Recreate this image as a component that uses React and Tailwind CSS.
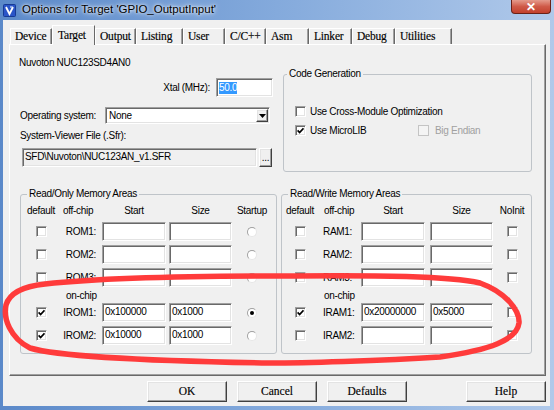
import React from 'react';

const sunken =
  'border border-t-[#a0a0a0] border-l-[#a0a0a0] border-r-white border-b-white shadow-[inset_1px_1px_0_#696969,inset_-1px_-1px_0_#e3e3e3]';
const raised =
  'border border-t-white border-l-white border-r-[#404040] border-b-[#404040] shadow-[inset_-1px_-1px_0_#a0a0a0,inset_1px_1px_0_#e3e3e3]';

function Edit({ className = '', value, gray }) {
  return (
    <div
      className={`h-[19px] shrink-0 ${sunken} ${gray ? 'bg-[#f0f0f0]' : 'bg-white'} pl-[2px] leading-[16px] whitespace-nowrap overflow-hidden ${className}`}
    >
      {value}
    </div>
  );
}

function Check({ checked, disabled }) {
  return (
    <span
      className={`w-[11px] h-[11px] shrink-0 flex items-center justify-center ${
        disabled ? 'border border-[#c4c4c4] bg-[#f4f4f4]' : `${sunken} bg-white`
      }`}
    >
      {checked && (
        <svg width="7" height="7" viewBox="0 0 7 7">
          <path d="M0.6 3.4 L2.6 5.5 L6.5 1.2" stroke="#000" strokeWidth="1.7" fill="none" />
        </svg>
      )}
    </span>
  );
}

function Radio({ checked }) {
  return (
    <span className="w-[10px] h-[10px] rounded-full border border-t-[#a0a0a0] border-l-[#a0a0a0] border-r-[#e6e6e6] border-b-[#e6e6e6] bg-white flex items-center justify-center">
      {checked && <span className="w-[4px] h-[4px] rounded-full bg-black" />}
    </span>
  );
}

const tabs = [
  ['Device', 'w-[42px]'],
  ['Target', 'w-[43px]'],
  ['Output', 'w-[41px]'],
  ['Listing', 'w-[47px]'],
  ['User', 'w-[42px]'],
  ['C/C++', 'w-[41px]'],
  ['Asm', 'w-[43px]'],
  ['Linker', 'w-[43px]'],
  ['Debug', 'w-[43px]'],
  ['Utilities', 'w-[57px]'],
];

// left group row: default | label | start | size | startup
function RomRow({ label, checked, start = '', size = '', radio, className = '' }) {
  return (
    <div className={`h-[19px] flex items-center ${className}`}>
      <div className="w-[38px] flex justify-center">
        <Check checked={checked} />
      </div>
      <div className="w-[42px] text-right pr-[6px]">{label}</div>
      <Edit className="w-[64px]" value={start} />
      <Edit className="w-[63px] ml-[3px]" value={size} />
      <div className="w-[40px] flex justify-center">
        <Radio checked={radio} />
      </div>
    </div>
  );
}

function RamRow({ label, checked, start = '', size = '', className = '' }) {
  return (
    <div className={`h-[19px] flex items-center ${className}`}>
      <div className="w-[34px] flex justify-center">
        <Check checked={checked} />
      </div>
      <div className="w-[44px] pl-[6px]">{label}</div>
      <Edit className="w-[64px]" value={start} />
      <Edit className="w-[63px] ml-[5px]" value={size} />
      <div className="w-[38px] flex justify-center">
        <Check />
      </div>
    </div>
  );
}

const Button = ({ children, className = '' }) => (
  <div
    className={`w-[80px] h-[21px] ${raised} bg-[#f0f0f0] flex items-center justify-center font-['Liberation_Serif',serif] text-[11.5px] [-webkit-text-stroke:0.15px_#000] ${className}`}
  >
    {children}
  </div>
);

export default function App() {
  return (
    <div className="relative w-[554px] h-[410px] flex flex-col overflow-hidden bg-gradient-to-r from-[#5b89c9] via-[#84aadc] to-[#b0c9ea] font-['Liberation_Sans',Arial,sans-serif] text-black text-[10px] tracking-[-0.3px]">
      {/* Title bar */}
      <div className="h-[20px] shrink-0 flex items-center pl-[3px]">
        <svg width="13" height="13" viewBox="0 0 13 13">
          <rect x="0.5" y="0.5" width="12" height="12" rx="1" fill="#2b55c8" stroke="#173a94" />
          <path d="M3 3 L6.5 10 L10 3" stroke="#fff" strokeWidth="1.8" fill="none" />
          <path d="M7 3 L9.5 3" stroke="#cfe0ff" strokeWidth="1.2" />
        </svg>
        <span className="ml-[6px] text-[11.5px] tracking-normal [text-shadow:0_0_6px_#fff,0_0_3px_#fff]">
          Options for Target 'GPIO_OutputInput'
        </span>
      </div>
      <div className="absolute top-0 right-[3px] w-[40px] h-[14px] rounded-b-[4px] border border-t-0 border-[#6a2117] bg-gradient-to-b from-[#e49a8c] via-[#cf5a48] to-[#c2402c] flex items-center justify-center text-white font-bold text-[12px] leading-none">
        ✕
      </div>

      {/* Client area */}
      <div className="flex-1 ml-[3px] mr-[4px] mb-[4px] bg-[#f0f0f0] flex flex-col">
        {/* Tabs */}
        <div className="h-[19px] mt-[5px] pl-[7px] flex items-end font-['Liberation_Serif',serif] text-[11.5px] tracking-[-0.2px] [-webkit-text-stroke:0.15px_#000]">
          {tabs.map(([name, w]) =>
            name === 'Target' ? (
              <div
                key={name}
                className={`${w} h-[20px] -mb-[1px] relative z-10 bg-[#f0f0f0] border-t border-l border-t-white border-l-white border-r border-r-[#696969] pl-[5px] pt-[3px] leading-[13px]`}
              >
                {name}
              </div>
            ) : (
              <div
                key={name}
                className={`${w} h-[16px] border-t border-l border-t-white border-l-white border-r border-r-[#696969] shadow-[inset_-1px_0_0_#a0a0a0] pl-[4px] flex items-center`}
              >
                {name}
              </div>
            )
          )}
        </div>

        {/* Tab page */}
        <div className="ml-[6px] w-[537px] h-[332px] border border-t-white border-l-white border-r-[#696969] border-b-[#696969] shadow-[inset_-1px_-1px_0_#a0a0a0] pt-[12px] pl-[8px]">
          <div className="flex">
            {/* Device / xtal / sfr */}
            <div className="w-[258px]">
              <div className="h-[12px] leading-[12px] pl-[1px]">Nuvoton NUC123SD4AN0</div>
              <div className="mt-[9px] h-[19px] flex items-center justify-end pr-[3px]">
                <span>Xtal (MHz):</span>
                <div className={`ml-[6px] w-[57px] h-[19px] ${sunken} bg-white pl-[2px] flex items-center`}>
                  <span className="bg-[#3399ff] text-white leading-[12px]">50.0</span>
                </div>
              </div>
              <div className="mt-[10px] h-[17px] flex items-center pl-[2px]">
                <span className="w-[85px]">Operating system:</span>
                <div className={`w-[165px] h-[17px] ${sunken} bg-white flex items-center`}>
                  <span className="flex-1 pl-[3px]">None</span>
                  <span className={`w-[12px] h-[13px] mr-[1px] ${raised} bg-[#f0f0f0] flex items-center justify-center`}>
                    <svg width="7" height="4" viewBox="0 0 7 4">
                      <path d="M0 0 H7 L3.5 4 Z" fill="#000" />
                    </svg>
                  </span>
                </div>
              </div>
              <div className="mt-[6px] h-[12px] leading-[12px] pl-[2px]">System-Viewer File (.Sfr):</div>
              <div className="mt-[6px] h-[19px] flex pl-[4px]">
                <Edit gray className="w-[235px]" value="SFD\Nuvoton\NUC123AN_v1.SFR" />
                <div className={`ml-[2px] w-[13px] h-[19px] ${raised} bg-[#f0f0f0] flex items-end justify-center leading-[12px] pb-[2px]`}>
                  ...
                </div>
              </div>
            </div>

            {/* Code Generation */}
            <fieldset className="ml-[7px] mt-[11px] w-[249px] h-[104px] border border-[#bfc4c9] rounded-[3px]">
              <legend className="ml-[3px] px-[2px] leading-[12px]">Code Generation</legend>
              <div className="pl-[11px]">
                <div className="mt-[25px] h-[12px] flex items-center">
                  <Check />
                  <span className="ml-[4px]">Use Cross-Module Optimization</span>
                </div>
                <div className="mt-[7px] h-[12px] flex items-center">
                  <div className="w-[123px] flex items-center">
                    <Check checked />
                    <span className="ml-[4px]">Use MicroLIB</span>
                  </div>
                  <Check disabled />
                  <span className="ml-[6px] text-[#a0a0a0]">Big Endian</span>
                </div>
              </div>
            </fieldset>
          </div>

          {/* Memory areas */}
          <div className="mt-[16px] pl-[2px] flex">
            <fieldset className="w-[257px] h-[166px] border border-[#bfc4c9] rounded-[3px]">
              <legend className="ml-[6px] px-[2px] leading-[12px]">Read/Only Memory Areas</legend>
              <div className="pl-[1px]">
                <div className="mt-[4px] h-[12px] flex items-center">
                  <div className="w-[38px] text-center">default</div>
                  <div className="w-[42px] pl-[3px]">off-chip</div>
                  <div className="w-[64px] text-center">Start</div>
                  <div className="w-[63px] ml-[3px] text-center">Size</div>
                  <div className="w-[40px] text-center">Startup</div>
                </div>
                <RomRow className="mt-[6px]" label="ROM1:" />
                <RomRow className="mt-[4px]" label="ROM2:" />
                <RomRow className="mt-[4px]" label="ROM3:" />
                <div className="mt-[3px] h-[12px] leading-[12px] pl-[44px]">on-chip</div>
                <RomRow className="mt-[1px]" label="IROM1:" checked start="0x100000" size="0x1000" radio />
                <RomRow className="mt-[4px]" label="IROM2:" checked start="0x10000" size="0x1000" />
              </div>
            </fieldset>

            <fieldset className="ml-[4px] w-[251px] h-[166px] border border-[#bfc4c9] rounded-[3px]">
              <legend className="ml-[6px] px-[2px] leading-[12px]">Read/Write Memory Areas</legend>
              <div className="pl-[1px]">
                <div className="mt-[4px] h-[12px] flex items-center">
                  <div className="w-[34px] text-center">default</div>
                  <div className="w-[44px] pl-[7px]">off-chip</div>
                  <div className="w-[64px] text-center">Start</div>
                  <div className="w-[63px] ml-[5px] text-center">Size</div>
                  <div className="w-[38px] text-center">NoInit</div>
                </div>
                <RamRow className="mt-[6px]" label="RAM1:" />
                <RamRow className="mt-[4px]" label="RAM2:" />
                <RamRow className="mt-[4px]" label="RAM3:" />
                <div className="mt-[3px] h-[12px] leading-[12px] pl-[41px]">on-chip</div>
                <RamRow className="mt-[1px]" label="IRAM1:" checked start="0x20000000" size="0x5000" />
                <RamRow className="mt-[4px]" label="IRAM2:" />
              </div>
            </fieldset>
          </div>
        </div>

        {/* Buttons */}
        <div className="mt-[5px] h-[21px] flex pl-[144px] tracking-normal">
          <Button>OK</Button>
          <Button className="ml-[10px]">Cancel</Button>
          <Button className="ml-[10px]">Defaults</Button>
          <Button className="ml-[59px]">Help</Button>
        </div>
      </div>

      {/* red hand-drawn mark */}
      <svg className="absolute inset-0 pointer-events-none" width="554" height="410" viewBox="0 0 554 410">
        <path
          d="M45 284 C120 276 250 276 280 276 C380 275 450 276 480 283 C505 292 520 310 519 323 C517 340 490 350 440 357 C380 361 300 363 270 363 C150 361 60 357 30 348 C10 338 3 318 6 305 C10 292 25 286 45 284 Z"
          fill="none"
          stroke="#ff3b3b"
          strokeWidth="5.5"
          strokeLinecap="round"
        />
      </svg>
    </div>
  );
}
